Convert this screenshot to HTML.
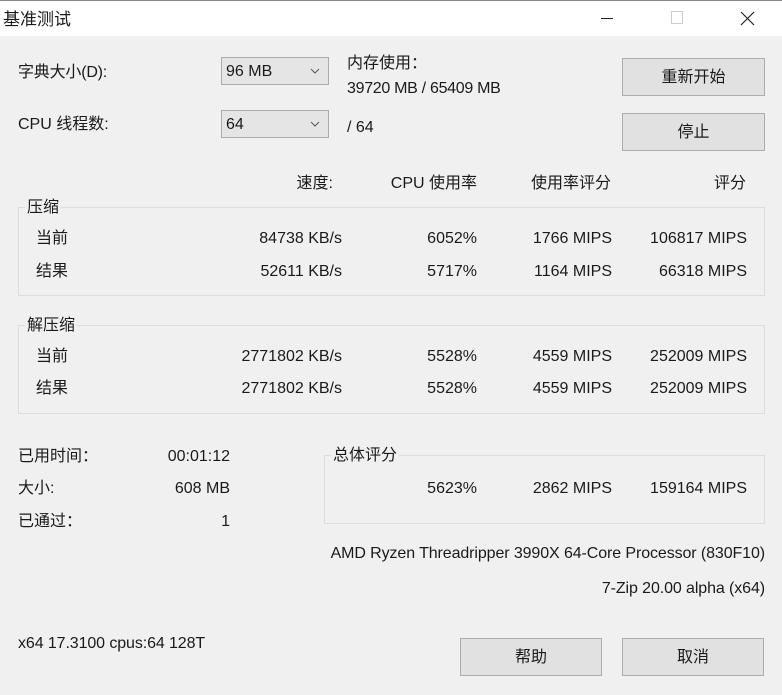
<!DOCTYPE html>
<html><head><meta charset="utf-8"><style>
*{margin:0;padding:0;box-sizing:border-box}
body{width:782px;height:695px;background:#f0f0f0;position:relative;overflow:hidden;font-family:"Liberation Sans","Noto Sans CJK SC",sans-serif;font-size:16px;color:#1a1a1a}
.t{position:absolute;line-height:20px;white-space:nowrap;margin-top:2px}
.r{text-align:right}
.title{position:absolute;left:0;top:0;width:782px;height:36px;background:#fff;border-top:1px solid #888}
.btn{position:absolute;background:#e1e1e1;border:1px solid #adadad;text-align:center;line-height:37px}
.cb{position:absolute;background:#e5e5e5;border:1px solid #acacac;padding-left:4px;line-height:28px}
.cb svg{position:absolute;right:8px;top:10px}
.g{position:absolute;border:1px solid #dcdcdc}
.gl{position:absolute;background:#f0f0f0;line-height:20px;padding:0 2px;margin-top:1px}
</style></head><body>
<div class="title"></div>
<div class="t" style="left:3px;top:8px;font-size:17px">基准测试</div>
<div style="position:absolute;left:601px;top:18px;width:12px;height:1px;background:#222"></div>
<div style="position:absolute;left:671px;top:11px;width:12px;height:13px;border:1px solid #ccc"></div>
<svg style="position:absolute;left:740px;top:11px" width="15" height="15"><path d="M1 1L14 14M14 1L1 14" stroke="#222" stroke-width="1.2"/></svg>

<div class="t" style="left:18px;top:61px;letter-spacing:-0.2px">字典大小(D):</div>
<div class="cb" style="left:221px;top:57px;width:108px;height:28px">96 MB<svg width="10" height="6"><path d="M1 1L5 5L9 1" stroke="#555" fill="none"/></svg></div>
<div class="t" style="left:347px;top:52px">内存使用：</div>
<div class="t" style="left:347px;top:77px;letter-spacing:-0.3px">39720 MB / 65409 MB</div>
<div class="btn" style="left:622px;top:58px;width:143px;height:38px">重新开始</div>

<div class="t" style="left:18px;top:113px">CPU 线程数:</div>
<div class="cb" style="left:221px;top:110px;width:108px;height:28px">64<svg width="10" height="6"><path d="M1 1L5 5L9 1" stroke="#555" fill="none"/></svg></div>
<div class="t" style="left:347px;top:116px">/ 64</div>
<div class="btn" style="left:622px;top:113px;width:143px;height:38px">停止</div>

<div class="t r" style="left:200px;width:133px;top:172px">速度:</div>
<div class="t r" style="left:340px;width:137px;top:172px">CPU 使用率</div>
<div class="t r" style="left:480px;width:131px;top:172px">使用率评分</div>
<div class="t r" style="left:620px;width:126px;top:172px">评分</div>

<div class="g" style="left:18px;top:207px;width:747px;height:89px"></div>
<div class="gl" style="left:25px;top:197px">压缩</div>
<div class="t" style="left:36px;top:227px">当前</div>
<div class="t r" style="left:200px;width:142px;top:227px">84738 KB/s</div>
<div class="t r" style="left:340px;width:137px;top:227px">6052%</div>
<div class="t r" style="left:480px;width:132px;top:227px">1766 MIPS</div>
<div class="t r" style="left:600px;width:147px;top:227px">106817 MIPS</div>
<div class="t" style="left:36px;top:260px">结果</div>
<div class="t r" style="left:200px;width:142px;top:260px">52611 KB/s</div>
<div class="t r" style="left:340px;width:137px;top:260px">5717%</div>
<div class="t r" style="left:480px;width:132px;top:260px">1164 MIPS</div>
<div class="t r" style="left:600px;width:147px;top:260px">66318 MIPS</div>

<div class="g" style="left:18px;top:325px;width:747px;height:89px"></div>
<div class="gl" style="left:25px;top:315px">解压缩</div>
<div class="t" style="left:36px;top:345px">当前</div>
<div class="t r" style="left:200px;width:142px;top:345px">2771802 KB/s</div>
<div class="t r" style="left:340px;width:137px;top:345px">5528%</div>
<div class="t r" style="left:480px;width:132px;top:345px">4559 MIPS</div>
<div class="t r" style="left:600px;width:147px;top:345px">252009 MIPS</div>
<div class="t" style="left:36px;top:377px">结果</div>
<div class="t r" style="left:200px;width:142px;top:377px">2771802 KB/s</div>
<div class="t r" style="left:340px;width:137px;top:377px">5528%</div>
<div class="t r" style="left:480px;width:132px;top:377px">4559 MIPS</div>
<div class="t r" style="left:600px;width:147px;top:377px">252009 MIPS</div>

<div class="t" style="left:18px;top:445px">已用时间：</div>
<div class="t r" style="left:100px;width:130px;top:445px">00:01:12</div>
<div class="t" style="left:18px;top:477px">大小:</div>
<div class="t r" style="left:100px;width:130px;top:477px">608 MB</div>
<div class="t" style="left:18px;top:510px">已通过：</div>
<div class="t r" style="left:100px;width:130px;top:510px">1</div>

<div class="g" style="left:324px;top:455px;width:441px;height:69px"></div>
<div class="gl" style="left:331px;top:445px">总体评分</div>
<div class="t r" style="left:340px;width:137px;top:477px">5623%</div>
<div class="t r" style="left:480px;width:132px;top:477px">2862 MIPS</div>
<div class="t r" style="left:600px;width:147px;top:477px">159164 MIPS</div>

<div class="t r" style="left:300px;width:465px;top:542px;letter-spacing:-0.1px">AMD Ryzen Threadripper 3990X 64-Core Processor (830F10)</div>
<div class="t r" style="left:400px;width:365px;top:577px;letter-spacing:-0.1px">7-Zip 20.00 alpha (x64)</div>
<div class="t" style="left:18px;top:632px;letter-spacing:-0.1px">x64 17.3100 cpus:64 128T</div>
<div class="btn" style="left:460px;top:638px;width:142px;height:38px">帮助</div>
<div class="btn" style="left:622px;top:638px;width:142px;height:38px">取消</div>
</body></html>
